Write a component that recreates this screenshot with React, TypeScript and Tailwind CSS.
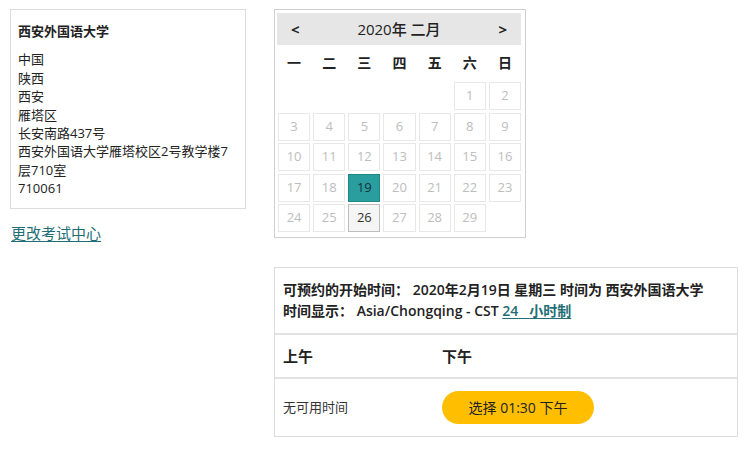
import React from "react";

const FONT = { fontFamily: '"Open Sans", "Noto Sans CJK SC", sans-serif' };

type Cell = { d: number | null; kind?: "sel" | "avail" };

const rows: Cell[][] = [
  [{ d: null }, { d: null }, { d: null }, { d: null }, { d: null }, { d: 1 }, { d: 2 }],
  [3, 4, 5, 6, 7, 8, 9].map((d) => ({ d })),
  [10, 11, 12, 13, 14, 15, 16].map((d) => ({ d })),
  [{ d: 17 }, { d: 18 }, { d: 19, kind: "sel" }, { d: 20 }, { d: 21 }, { d: 22 }, { d: 23 }],
  [{ d: 24 }, { d: 25 }, { d: 26, kind: "avail" }, { d: 27 }, { d: 28 }, { d: 29 }, { d: null }],
];

function DayCell({ c }: { c: Cell }) {
  if (c.d === null) return <div className="h-[28px]" />;
  if (c.kind === "sel")
    return (
      <div className="h-[28px] flex items-center justify-center bg-[#2a9d9f] border border-[#22898b] text-[#12303a] text-[13px]">
        {c.d}
      </div>
    );
  if (c.kind === "avail")
    return (
      <div className="h-[28px] flex items-center justify-center bg-[#f5f5f5] border border-[#bdbdbd] text-[#333] text-[13px]">
        {c.d}
      </div>
    );
  return (
    <div className="h-[28px] flex items-center justify-center border border-[#e8e8e8] text-[#bdbdbd] text-[13px]">
      {c.d}
    </div>
  );
}

export default function App() {
  return (
    <div className="w-[750px] h-[461px] bg-white text-[#222]" style={FONT}>
      <div className="flex pt-[9px] pl-[10px]">
        {/* Left column */}
        <div className="w-[236px]">
          <div className="border border-[#dcdcdc] pl-[7px] pr-[4px] pt-[12px] pb-[10px] text-[13px] leading-[18.4px]">
            <div className="font-bold text-[#222]">西安外国语大学</div>
            <div className="mt-[10px] text-[#222]">
              <div>中国</div>
              <div>陕西</div>
              <div>西安</div>
              <div>雁塔区</div>
              <div>长安南路437号</div>
              <div className="whitespace-nowrap">西安外国语大学雁塔校区2号教学楼7</div>
              <div>层710室</div>
              <div>710061</div>
            </div>
          </div>
          <a href="#" className="inline-block mt-[13px] ml-[1px] text-[15px] text-[#1f6e75] underline underline-offset-2">
            更改考试中心
          </a>
        </div>

        {/* Right column */}
        <div className="ml-[28px]">
          {/* Calendar */}
          <div className="w-[252px] border border-[#cfcfcf] pt-[3px] pl-[2px] pr-[4px] pb-[5px]">
            <div className="h-[32px] bg-[#e6e6e6] flex items-center justify-between px-[14px] text-[#222]">
              <span className="text-[15px] font-bold">&lt;</span>
              <span className="text-[15px] font-medium">2020年 二月</span>
              <span className="text-[15px] font-bold">&gt;</span>
            </div>
            <div className="grid grid-cols-7 gap-x-[3px] h-[35px] items-center pl-[1px] text-[14px] font-bold text-[#222]">
              {["一", "二", "三", "四", "五", "六", "日"].map((w) => (
                <div key={w} className="text-center">
                  {w}
                </div>
              ))}
            </div>
            <div className="mt-[2px] pl-[1px] grid grid-cols-7 gap-x-[3px] gap-y-[2.5px]">
              {rows.flat().map((c, i) => (
                <DayCell key={i} c={c} />
              ))}
            </div>
          </div>

          {/* Appointment */}
          <div className="mt-[29px] w-[464px] border border-[#dcdcdc]">
            <div className="px-[8px] pt-[11px] pb-[12px] text-[14px] leading-[21px] font-semibold text-[#222] border-b-2 border-[#e2e2e2]">
              <div className="whitespace-nowrap">可预约的开始时间： 2020年2月19日 星期三 时间为 西安外国语大学</div>
              <div>
                时间显示： Asia/Chongqing - CST{" "}
                <a href="#" className="text-[#1f6e75] underline underline-offset-2 whitespace-pre">
                  24{"   "}小时制
                </a>
              </div>
            </div>
            <div className="flex items-center h-[44px] px-[8px] text-[15px] font-semibold text-[#222] border-b-2 border-[#e2e2e2]">
              <div className="w-[159px]">上午</div>
              <div>下午</div>
            </div>
            <div className="flex items-center h-[57px] px-[8px]">
              <div className="w-[159px] text-[13px] text-[#333]">无可用时间</div>
              <button className="w-[152px] h-[33px] rounded-full bg-[#ffbf00] text-[14px] text-[#222]">
                选择 01:30 下午
              </button>
            </div>
          </div>
        </div>
      </div>
    </div>
  );
}
